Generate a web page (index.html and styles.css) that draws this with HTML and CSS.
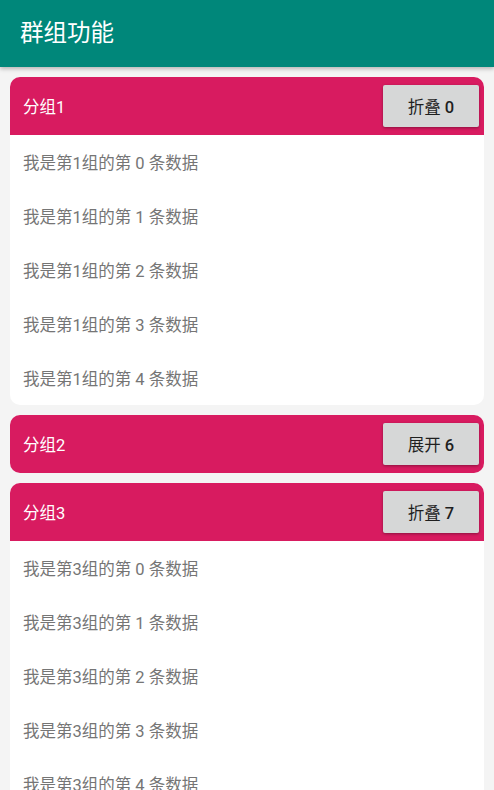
FILE: index.html
```html
<!DOCTYPE html>
<html lang="zh">
<head>
<meta charset="utf-8">
<link rel="stylesheet" href="styles.css">
</head>
<body>
<header class="appbar">群组功能</header>
<main class="list">
  <section class="card">
    <div class="group-head"><span class="group-title">分组1</span><button class="btn">折叠 <span class="num">0</span></button></div>
    <div class="item">我是第1组的第 0 条数据</div>
    <div class="item">我是第1组的第 1 条数据</div>
    <div class="item">我是第1组的第 2 条数据</div>
    <div class="item">我是第1组的第 3 条数据</div>
    <div class="item">我是第1组的第 4 条数据</div>
  </section>
  <section class="card">
    <div class="group-head"><span class="group-title">分组2</span><button class="btn">展开 <span class="num">6</span></button></div>
  </section>
  <section class="card">
    <div class="group-head"><span class="group-title">分组3</span><button class="btn">折叠 <span class="num">7</span></button></div>
    <div class="item">我是第3组的第 0 条数据</div>
    <div class="item">我是第3组的第 1 条数据</div>
    <div class="item">我是第3组的第 2 条数据</div>
    <div class="item">我是第3组的第 3 条数据</div>
    <div class="item">我是第3组的第 4 条数据</div>
  </section>
</main>
</body>
</html>
```
FILE: styles.css
```css
html, body {
  margin: 0;
  padding: 0;
  background: #f4f4f4;
  font-family: Roboto, "Noto Sans CJK SC", sans-serif;
  overflow: hidden;
}
.appbar {
  height: 67px;
  background: #00877a;
  color: #fff;
  font-size: 23.5px;
  line-height: 67px;
  padding-left: 20px;
  box-shadow: 0 2px 4px rgba(0,0,0,0.25);
  position: relative;
  z-index: 1;
}
.list {
  display: flex;
  flex-direction: column;
  gap: 10px;
  padding: 10px 10px 0 10px;
}
.card {
  background: #fff;
  border-radius: 10px;
  overflow: hidden;
}
.group-head {
  height: 58px;
  background: #d81b60;
  display: flex;
  align-items: center;
  justify-content: space-between;
  padding: 0 5px 0 13px;
}
.group-title {
  color: #fff;
  font-size: 16.5px;
}
.btn {
  width: 96px;
  height: 42px;
  border: none;
  border-radius: 2px;
  background: #d6d7d7;
  color: #1f1f1f;
  font-family: Roboto, "Noto Sans CJK SC", sans-serif;
  font-size: 16.5px;
  font-weight: 400;
  box-shadow: 0 1px 3px rgba(0,0,0,0.35);
  padding: 0;
  margin-top: -1px;
}
.num {
  font-weight: 500;
}
.item {
  height: 51px;
  line-height: 51px;
  padding-top: 3px;
  padding-left: 13px;
  color: #757575;
  font-size: 16.5px;
}
```
